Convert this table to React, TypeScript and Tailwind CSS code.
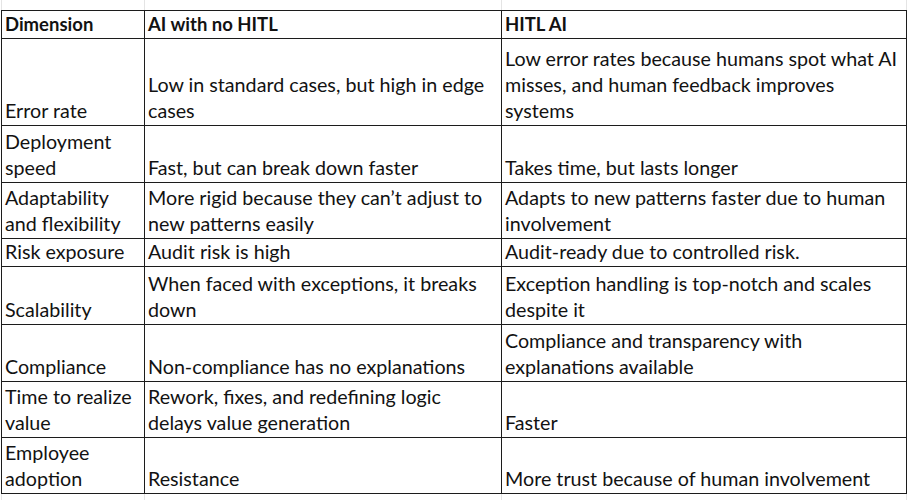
const rows: { h: string; cells: string[][] }[] = [
  { h: 'h-[87px]', cells: [['Error rate'], ['Low in standard cases, but high in edge', 'cases'], ['Low error rates because humans spot what AI', 'misses, and human feedback improves', 'systems']] },
  { h: 'h-[57px]', cells: [['Deployment', 'speed'], ['Fast, but can break down faster'], ['Takes time, but lasts longer']] },
  { h: 'h-[56px]', cells: [['Adaptability', 'and flexibility'], ['More rigid because they can’t adjust to', 'new patterns easily'], ['Adapts to new patterns faster due to human', 'involvement']] },
  { h: 'h-[28px]', cells: [['Risk exposure'], ['Audit risk is high'], ['Audit-ready due to controlled risk.']] },
  { h: 'h-[58px]', cells: [['Scalability'], ['When faced with exceptions, it breaks', 'down'], ['Exception handling is top-notch and scales', 'despite it']] },
  { h: 'h-[57px]', cells: [['Compliance'], ['Non-compliance has no explanations'], ['Compliance and transparency with', 'explanations available']] },
  { h: 'h-[56px]', cells: [['Time to realize', 'value'], ['Rework, fixes, and redefining logic', 'delays value generation'], ['Faster']] },
  { h: 'h-[56px]', cells: [['Employee', 'adoption'], ['Resistance'], ['More trust because of human involvement']] },
];

const cols = 'grid grid-cols-[143px_357px_405px]';

function Cell({ lines, h, bold }: { lines: string[]; h: string; bold?: boolean }) {
  return (
    <div className={`${h} flex flex-col justify-end overflow-hidden border-r border-b border-[#1c1c1c] pl-[3px] pb-[1px] ${bold ? 'font-bold text-[18.5px]' : ''}`}>
      {lines.map((l, i) => (
        <div key={i} className="whitespace-nowrap leading-[26px]">{l}</div>
      ))}
    </div>
  );
}

export default function App() {
  return (
    <div className="w-[908px] h-[500px] overflow-hidden bg-white text-[#121212] text-[19.7px]" style={{ fontFamily: 'Lato, "Open Sans", sans-serif' }}>
      {/* faint sheet gridlines above */}
      <div className={`${cols} ml-[1px] h-[10px] border-l border-[#e4e4e4]`}>
        <div className="border-r border-[#e4e4e4]" />
        <div className="border-r border-[#e4e4e4]" />
        <div className="border-r border-[#e4e4e4]" />
      </div>

      <div className={`${cols} ml-[1px] w-[906px] border-l border-t border-[#1c1c1c]`}>
        <Cell lines={['Dimension']} h="h-[28px]" bold />
        <Cell lines={['AI with no HITL']} h="h-[28px]" bold />
        <Cell lines={['HITL AI']} h="h-[28px]" bold />
        {rows.map((r, i) =>
          r.cells.map((c, j) => <Cell key={`${i}-${j}`} lines={c} h={r.h} />)
        )}
      </div>

      {/* faint sheet gridlines below */}
      <div className={`${cols} ml-[1px] h-[10px] border-l border-[#e4e4e4]`}>
        <div className="border-r border-[#e4e4e4]" />
        <div className="border-r border-[#e4e4e4]" />
        <div className="border-r border-[#e4e4e4]" />
      </div>
    </div>
  );
}
